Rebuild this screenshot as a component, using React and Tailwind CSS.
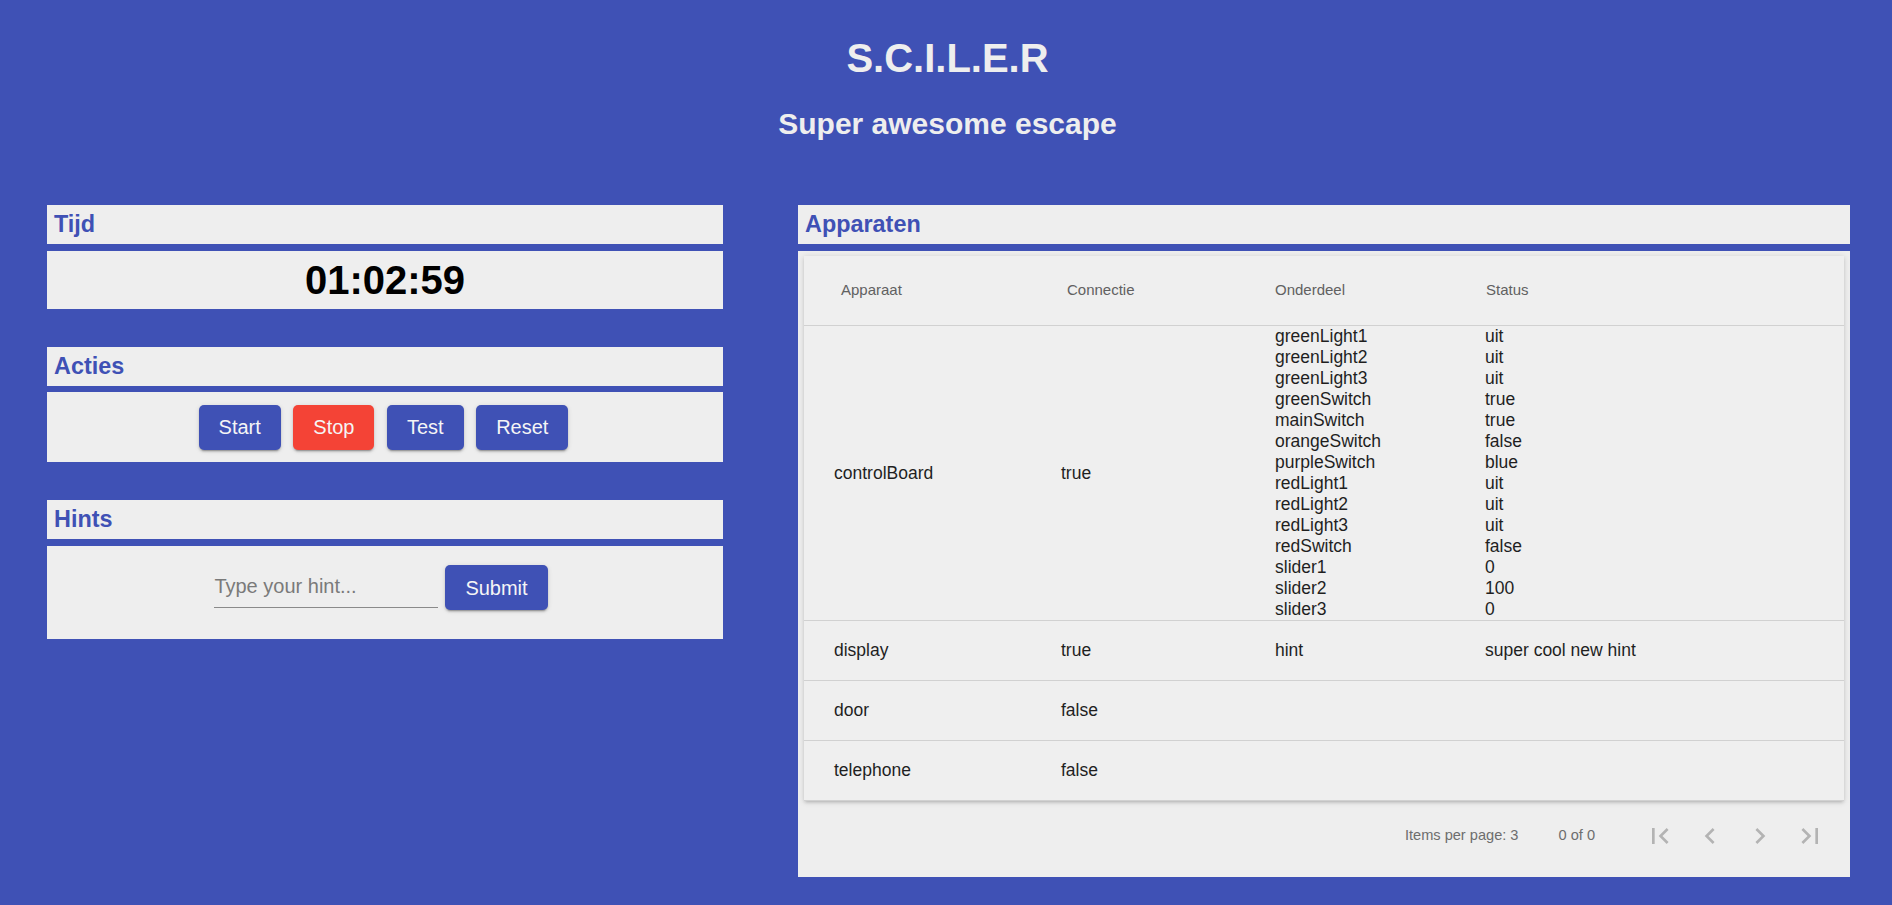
import React from "react";

const font = { fontFamily: '"Liberation Sans", Arial, sans-serif' };

function SectionHeader({ children }) {
  return (
    <div className="h-[39px] bg-[#eeeeee] px-[7px] flex items-center text-[23.4px] font-bold text-[#3f51b5] leading-none">
      {children}
    </div>
  );
}

function RaisedButton({ children, red }) {
  return (
    <button
      className={
        "h-[45px] px-[20px] rounded-[5px] text-[20px] text-[#f5f5f5] leading-none shadow-[0_3px_1px_-2px_rgba(0,0,0,0.2),0_2px_2px_0_rgba(0,0,0,0.14),0_1px_5px_0_rgba(0,0,0,0.12)] " +
        (red ? "bg-[#f44336]" : "bg-[#3f51b5]")
      }
    >
      {children}
    </button>
  );
}

const parts = [
  ["greenLight1", "uit"],
  ["greenLight2", "uit"],
  ["greenLight3", "uit"],
  ["greenSwitch", "true"],
  ["mainSwitch", "true"],
  ["orangeSwitch", "false"],
  ["purpleSwitch", "blue"],
  ["redLight1", "uit"],
  ["redLight2", "uit"],
  ["redLight3", "uit"],
  ["redSwitch", "false"],
  ["slider1", "0"],
  ["slider2", "100"],
  ["slider3", "0"],
];

function Icon({ d }) {
  return (
    <div className="w-[50px] h-[50px] flex items-center justify-center">
      <svg width="32" height="32" viewBox="0 0 24 24" fill="#b3b3b3">
        <path d={d} />
      </svg>
    </div>
  );
}

export default function App() {
  return (
    <div style={font} className="min-h-[905px] bg-[#3f51b5] text-[#1f1f1f]">
      <div className="pt-[38px] flex flex-col items-center text-[#eeeeee] font-bold">
        <div className="text-[40px] leading-[40px] h-[40px] pl-[3px]">S.C.I.L.E.R</div>
        <div className="mt-[31px] text-[30px] leading-[30px] h-[30px] pl-[3px]">Super awesome escape</div>
      </div>

      <div className="mt-[66px] pl-[47px] flex gap-[75px]">
        {/* Left column */}
        <div className="w-[676px] flex flex-col">
          <SectionHeader>Tijd</SectionHeader>
          <div className="mt-[7px] h-[58px] bg-[#eeeeee] flex items-center justify-center text-[40px] font-bold text-black leading-none">
            01:02:59
          </div>

          <div className="mt-[38px]">
            <SectionHeader>Acties</SectionHeader>
          </div>
          <div className="mt-[6px] h-[70px] bg-[#eeeeee] flex items-center justify-center gap-[12.5px] pr-[3px]">
            <RaisedButton>Start</RaisedButton>
            <RaisedButton red>Stop</RaisedButton>
            <RaisedButton>Test</RaisedButton>
            <RaisedButton>Reset</RaisedButton>
          </div>

          <div className="mt-[38px]">
            <SectionHeader>Hints</SectionHeader>
          </div>
          <div className="mt-[7px] h-[93px] bg-[#eeeeee] flex items-start justify-center pt-[19px] pr-[8px]">
            <input
              placeholder="Type your hint..."
              className="w-[224px] h-[43px] bg-transparent border-b border-[#8a8a8a] text-[20px] text-[#222] placeholder:text-[#7a7a7a] outline-none"
            />
            <div className="ml-[7px]">
              <RaisedButton>Submit</RaisedButton>
            </div>
          </div>
        </div>

        {/* Right column */}
        <div className="w-[1052px] flex flex-col">
          <SectionHeader>Apparaten</SectionHeader>
          <div className="mt-[7px] bg-[#eeeeee] px-[6px] pt-[5px] pb-[6px]">
            <div className="bg-[#efefef] shadow-[0_2px_3px_-1px_rgba(0,0,0,0.18),0_1px_6px_0_rgba(0,0,0,0.14)]">
              {/* header */}
              <div className="h-[70px] border-b border-[#d1d1d1] grid grid-cols-[227px_214px_210px_1fr] pl-[30px] items-center text-[15px] text-[#616161]">
                <div className="pl-[7px]">Apparaat</div>
                <div className="pl-[6px]">Connectie</div>
                <div>Onderdeel</div>
                <div className="pl-[1px]">Status</div>
              </div>
              {/* controlBoard */}
              <div className="border-b border-[#d1d1d1] grid grid-cols-[227px_214px_210px_1fr] pl-[30px] items-center text-[17.5px]">
                <div>controlBoard</div>
                <div>true</div>
                <div className="flex flex-col leading-[21px]">
                  {parts.map(([p]) => (
                    <div key={p}>{p}</div>
                  ))}
                </div>
                <div className="flex flex-col leading-[21px]">
                  {parts.map(([p, v]) => (
                    <div key={p}>{v}</div>
                  ))}
                </div>
              </div>
              {[
                ["display", "true", "hint", "super cool new hint"],
                ["door", "false", "", ""],
                ["telephone", "false", "", ""],
              ].map((r) => (
                <div
                  key={r[0]}
                  className="h-[60px] border-b border-[#d1d1d1] grid grid-cols-[227px_214px_210px_1fr] pl-[30px] items-center text-[17.5px]"
                >
                  <div>{r[0]}</div>
                  <div>{r[1]}</div>
                  <div>{r[2]}</div>
                  <div>{r[3]}</div>
                </div>
              ))}
            </div>
            {/* paginator */}
            <div className="h-[70px] flex items-center justify-end pr-[9px] text-[14.6px] text-[#6d6d6d]">
              <div>Items per page: 3</div>
              <div className="ml-[40px]">0 of 0</div>
              <div className="ml-[40px] flex">
                <Icon d="M18.41 16.59L13.82 12l4.59-4.59L17 6l-6 6 6 6zM6 6h2v12H6z" />
                <Icon d="M15.41 7.41L14 6l-6 6 6 6 1.41-1.41L10.83 12z" />
                <Icon d="M10 6L8.59 7.41 13.17 12l-4.58 4.59L10 18l6-6z" />
                <Icon d="M5.59 7.41L10.18 12l-4.59 4.59L7 18l6-6-6-6zM16 6h2v12h-2z" />
              </div>
            </div>
          </div>
        </div>
      </div>
    </div>
  );
}
